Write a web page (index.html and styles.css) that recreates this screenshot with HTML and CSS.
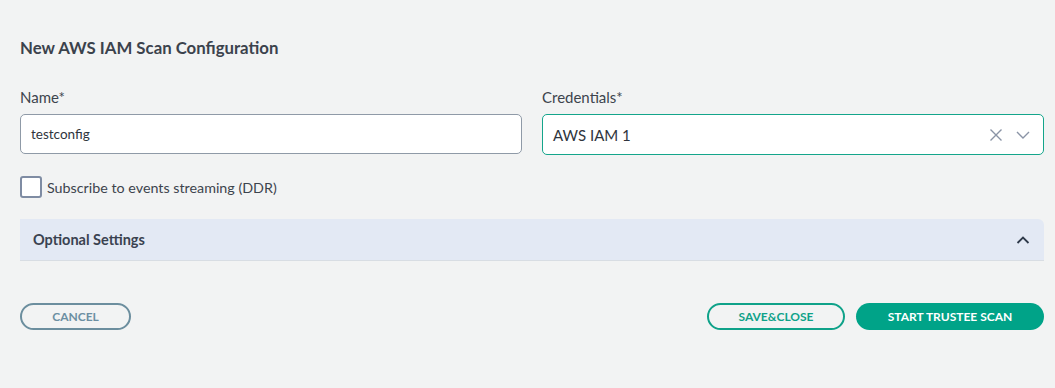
FILE: index.html
```html
<!DOCTYPE html>
<html>
<head>
<meta charset="utf-8">
<link rel="stylesheet" href="styles.css">
</head>
<body>
<div class="page">
  <h1 class="title">New AWS IAM Scan Configuration</h1>
  <div class="fields">
    <div class="field">
      <label class="label">Name*</label>
      <div class="input">testconfig</div>
    </div>
    <div class="field">
      <label class="label">Credentials*</label>
      <div class="select">
        <span class="select-value">AWS IAM 1</span>
        <span class="select-icons">
          <svg width="14" height="14" viewBox="0 0 14 14"><path d="M1.5 1.5 L12.5 12.5 M12.5 1.5 L1.5 12.5" stroke="#8a94a6" stroke-width="1.4" fill="none"/></svg>
          <svg width="14" height="10" viewBox="0 0 14 10"><path d="M1 2 L7 8 L13 2" stroke="#8a94a6" stroke-width="1.4" fill="none"/></svg>
        </span>
      </div>
    </div>
  </div>
  <div class="check-row">
    <span class="checkbox"></span>
    <span class="check-label">Subscribe to events streaming (DDR)</span>
  </div>
  <div class="panel">
    <span class="panel-title">Optional Settings</span>
    <svg width="14" height="10" viewBox="0 0 14 10"><path d="M1.5 8 L7 2.5 L12.5 8" stroke="#2f3a4a" stroke-width="1.8" fill="none"/></svg>
  </div>
  <div class="actions">
    <button class="btn btn-cancel">CANCEL</button>
    <div class="right-actions">
      <button class="btn btn-outline">SAVE&amp;CLOSE</button>
      <button class="btn btn-primary">START TRUSTEE SCAN</button>
    </div>
  </div>
</div>
</body>
</html>
```
FILE: styles.css
```css
html, body {
  margin: 0;
  padding: 0;
  background: #f2f3f3;
  font-family: Lato, "Open Sans", sans-serif;
  color: #3c434d;
}
.page {
  width: 1024px;
  padding: 36px 0 0 20px;
}
.title {
  margin: 0;
  font-size: 16.8px;
  font-weight: 700;
  line-height: 24px;
  color: #3b424c;
}
.fields {
  display: grid;
  grid-template-columns: 1fr 1fr;
  gap: 20px;
  margin-top: 28px;
}
.field {
  display: flex;
  flex-direction: column;
}
.label {
  font-size: 15px;
  line-height: 18px;
  margin-bottom: 8px;
  color: #3d444d;
}
.input {
  height: 40px;
  box-sizing: border-box;
  border: 1px solid #8f9aa7;
  border-radius: 5px;
  background: #fff;
  padding: 0 10px;
  display: flex;
  align-items: center;
  font-size: 13.5px;
  color: #2f353d;
}
.select {
  height: 41px;
  box-sizing: border-box;
  border: 1px solid #14a58b;
  border-radius: 5px;
  background: #fff;
  padding: 0 13px 0 10px;
  display: flex;
  align-items: center;
  justify-content: space-between;
  font-size: 15px;
  color: #2f353d;
}
.select-icons {
  display: flex;
  align-items: center;
  gap: 13px;
}
.check-row {
  display: flex;
  align-items: center;
  gap: 5px;
  margin-top: 21px;
}
.checkbox {
  width: 22px;
  height: 22px;
  box-sizing: border-box;
  border: 2px solid #7f8ca3;
  border-radius: 3px;
  background: #fff;
}
.check-label {
  font-size: 14.3px;
  color: #3d444d;
}
.panel {
  margin-top: 21px;
  height: 42px;
  box-sizing: border-box;
  background: #e3e9f4;
  border-radius: 0 6px 0 0;
  border-bottom: 1px solid #d8dde3;
  display: flex;
  align-items: center;
  justify-content: space-between;
  padding: 0 14px 0 13px;
}
.panel-title {
  font-size: 14.5px;
  font-weight: 700;
  color: #3a4250;
}
.actions {
  margin-top: 42px;
  display: flex;
  justify-content: space-between;
  align-items: center;
}
.right-actions {
  display: flex;
  gap: 11px;
}
.btn {
  font-family: Lato, "Open Sans", sans-serif;
  font-size: 12px;
  font-weight: 700;
  height: 27px;
  border-radius: 14px;
  box-sizing: border-box;
  padding: 0;
  cursor: pointer;
}
.btn-cancel {
  width: 111px;
  border: 2px solid #6c8e9e;
  background: transparent;
  color: #6c8fa2;
}
.btn-outline {
  width: 138px;
  border: 2px solid #0fa289;
  background: transparent;
  color: #0fa289;
}
.btn-primary {
  width: 188px;
  border: none;
  background: #00a388;
  color: #fff;
}
```
